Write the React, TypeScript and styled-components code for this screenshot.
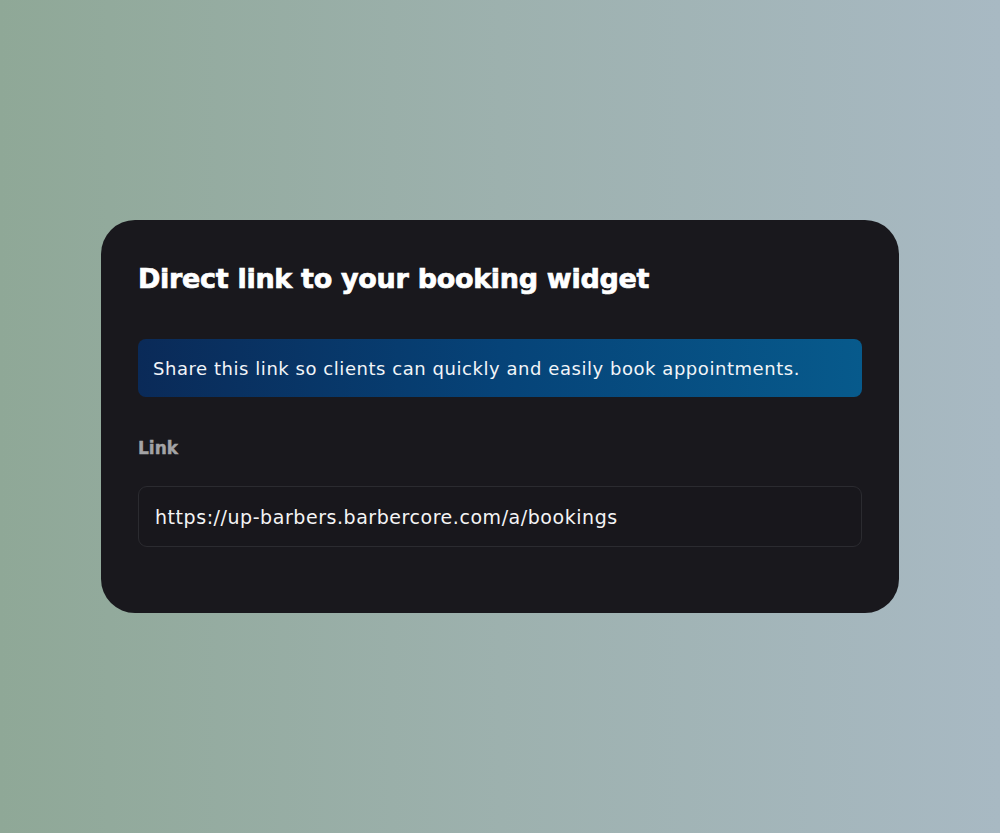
import React from "react";
import styled, { createGlobalStyle } from "styled-components";

const GlobalStyle = createGlobalStyle`
  html, body {
    margin: 0;
    padding: 0;
    height: 100%;
  }
  body {
    font-family: "DejaVu Sans", "Noto Sans", sans-serif;
    background: linear-gradient(90deg, #8fa897 0%, #9db1ae 50%, #a8b9c3 100%);
  }
  #root {
    height: 100%;
  }
`;

const Page = styled.div`
  min-height: 100vh;
  display: flex;
  align-items: center;
  justify-content: center;
`;

const Card = styled.section`
  width: 798px;
  box-sizing: border-box;
  padding: 42px 37px 66px;
  background: #19181d;
  border-radius: 34px;
  display: flex;
  flex-direction: column;
`;

const Title = styled.h2`
  margin: 0;
  color: #ffffff;
  font-size: 27px;
  font-weight: 700;
  line-height: 34px;
  letter-spacing: -0.3px;
  -webkit-text-stroke: 0.7px #ffffff;
`;

const Notice = styled.div`
  margin-top: 43px;
  height: 58px;
  display: flex;
  align-items: center;
  padding: 0 15px;
  border-radius: 8px;
  background: linear-gradient(90deg, #0a2a58 0%, #064378 50%, #075a8c 100%);
  color: #f2f5f8;
  font-size: 18px;
  letter-spacing: 0.55px;
`;

const Label = styled.label`
  margin-top: 40px;
  color: #a3a3a6;
  font-size: 17px;
  font-weight: 700;
  line-height: 22px;
  -webkit-text-stroke: 0.4px #a3a3a6;
`;

const LinkField = styled.div`
  margin-top: 27px;
  height: 61px;
  box-sizing: border-box;
  display: flex;
  align-items: center;
  padding: 0 16px;
  border: 1px solid #2b2b30;
  border-radius: 9px;
  background: #18171c;
  color: #f4f4f5;
  font-size: 19px;
  letter-spacing: 0.55px;
`;

export default function App() {
  return (
    <>
      <GlobalStyle />
      <Page>
        <Card>
          <Title>Direct link to your booking widget</Title>
          <Notice>
            Share this link so clients can quickly and easily book appointments.
          </Notice>
          <Label>Link</Label>
          <LinkField>https://up-barbers.barbercore.com/a/bookings</LinkField>
        </Card>
      </Page>
    </>
  );
}
